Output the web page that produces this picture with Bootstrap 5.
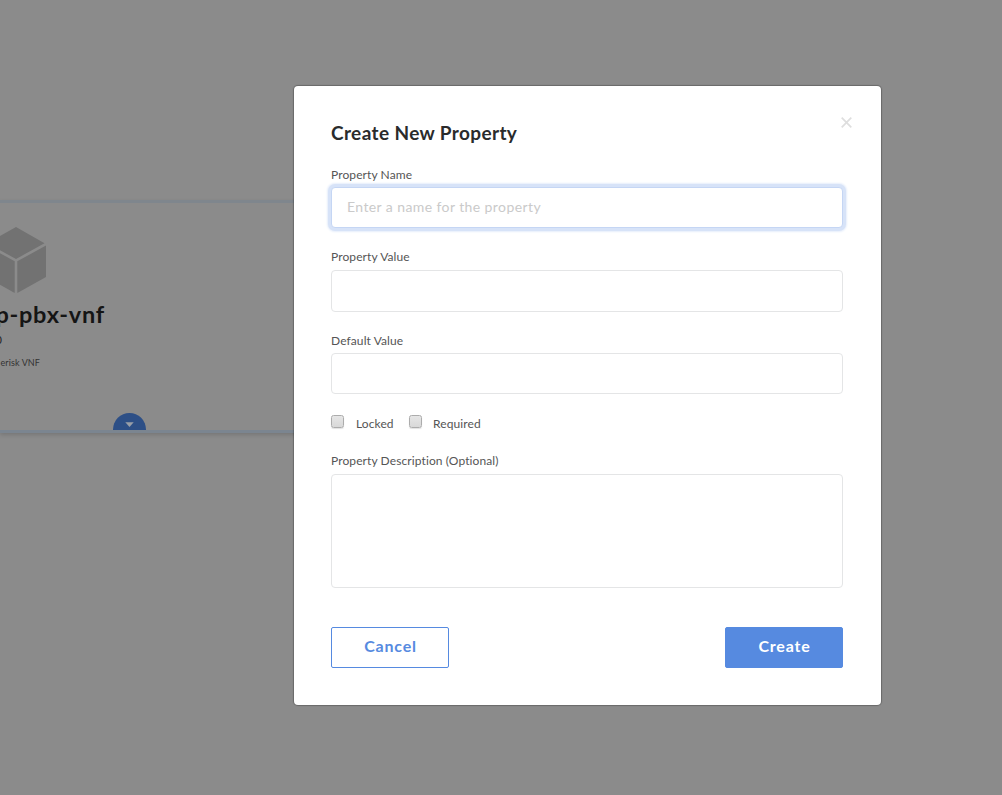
<!DOCTYPE html>
<html lang="en">
<head>
<meta charset="utf-8">
<meta name="viewport" content="width=device-width, initial-scale=1">
<title>Create New Property</title>
<link href="https://cdn.jsdelivr.net/npm/bootstrap@5.3.0/dist/css/bootstrap.min.css" rel="stylesheet">
<style>
body{background:#8b8b8b;font-family:Lato,"Open Sans",sans-serif;color:#333;height:795px;overflow:hidden}
.vnf-panel{margin-top:200px;height:233px;width:320px;background:#8b8b8b;border-top:3px solid #7f868d;border-bottom:3px solid #7b8590;box-shadow:0 2px 4px rgba(0,0,0,.15)}
.vnf-info{width:106px;padding-top:24px;overflow:hidden}
.vnf-info svg{display:block;margin-left:-14px}
.vnf-line{display:flex;justify-content:flex-end;white-space:nowrap}
.vnf-name{font-size:23.5px;font-weight:700;line-height:28px;color:#151515;margin-top:7px;width:105px;letter-spacing:.75px}
.vnf-version{font-size:11px;line-height:14px;margin-top:5px;width:2px;color:#222}
.vnf-kind{font-size:9px;line-height:12px;margin-top:10px;width:40px;color:#333;letter-spacing:.1px}
.vnf-toggle{width:33px;height:17px;margin:44px 0 0 113px;border-radius:17px 17px 0 0;background:#2d4f86}
.modal-layer{inset:0}
.dialog-box{width:587px;height:619px;margin:86px 0 0 294px;padding:0 38px 0 37px;border:0;border-radius:4px;background:#fff;box-shadow:0 0 1px 1px rgba(0,0,0,.25)}
.dialog-head{height:81px;padding-top:33px}
.dialog-head h1{font-size:19px;line-height:28px;font-weight:700;color:#2a2b2c;letter-spacing:.38px}
.close-x{width:11px;height:11px;margin:-2px -9px 0 0}
.field-label{display:block;font-size:12px;line-height:16px;color:#555;margin:0;letter-spacing:.1px}
.form-control{border:1px solid #e4e5e6;border-radius:4px;padding:0 15px;height:42px;font-size:14px;color:#333;background:#fff;resize:none}
.form-control::placeholder{color:#cacaca;opacity:1;letter-spacing:.41px}
.form-control.focused{height:41px;padding-bottom:2px;margin-top:4px;border-color:#c5d6f4;box-shadow:0 0 0 3px #d7e3f8,0 0 2px 4px #e6eefb}
.value-label{margin-top:21px}
.value-field{margin-top:5px}
.default-field{margin-top:4px;height:41px}
.checks{margin-top:21px;height:38px}
.locked-label{margin:1px 15px 0 12px;width:38px;white-space:nowrap}
.required-label{margin:1px 0 0 11px}
.description-field{margin-top:5px;height:114px}
.dialog-foot{margin-top:39px}
.form-check-input.tick{width:13px;height:13px;margin:0;border:1px solid #acacac;border-radius:2.5px;background:linear-gradient(#e6e6e6,#d8d8d8);box-shadow:0 1px 1px rgba(0,0,0,.12)}
.action{width:118px;height:41px;border-radius:2px;border:1px solid #568ae0;font-size:16px;font-weight:700;line-height:36px;padding:0 0 3px 1px;letter-spacing:.8px}
.action-outline{color:#568ae0;background:#fff}
.action-fill{color:#fff;background:#568ae0}
</style>
</head>
<body class="position-relative">
<main class="overflow-hidden h-100">
  <section class="vnf-panel">
    <div class="vnf-info">
      <svg width="60" height="66" viewBox="0 0 60 66" fill="#727272"><path d="M30 0 58.5 16.2 30 32 1.5 16.2Z"/><path d="M60 18.5V50L31.3 66V34.3Z"/><path d="M0 18.5V50L28.7 66V34.3Z"/></svg>
      <div class="vnf-line vnf-name"><span>p-pbx-vnf</span></div>
      <div class="vnf-line vnf-version"><span>0</span></div>
      <div class="vnf-line vnf-kind"><span>erisk VNF</span></div>
    </div>
    <div class="vnf-toggle d-flex justify-content-center">
      <svg width="9" height="17" viewBox="0 0 9 17"><path d="M.3 9.3h8.4L4.5 14Z" fill="#9a9fa7"/></svg>
    </div>
  </section>
</main>
<div class="modal-layer position-absolute">
  <form class="dialog-box">
    <header class="dialog-head d-flex justify-content-between">
      <h1 class="m-0">Create New Property</h1>
      <svg class="close-x" viewBox="0 0 11 11" stroke="#dedede" stroke-width="1.7"><path d="m.7.7 9.6 9.6M10.3.7.7 10.3"/></svg>
    </header>
    <label class="field-label" for="pname">Property Name</label>
    <input id="pname" class="form-control focused" placeholder="Enter a name for the property">
    <label class="field-label value-label" for="pvalue">Property Value</label>
    <input id="pvalue" class="form-control value-field">
    <label class="field-label value-label" for="dvalue">Default Value</label>
    <input id="dvalue" class="form-control default-field">
    <div class="d-flex checks">
      <input id="locked" type="checkbox" class="form-check-input tick"><label class="field-label locked-label" for="locked">Locked</label>
      <input id="required" type="checkbox" class="form-check-input tick"><label class="field-label required-label" for="required">Required</label>
    </div>
    <label class="field-label" for="pdesc">Property Description (Optional)</label>
    <textarea id="pdesc" class="form-control description-field"></textarea>
    <footer class="dialog-foot d-flex justify-content-between">
      <button type="button" class="btn action action-outline">Cancel</button>
      <button type="button" class="btn action action-fill">Create</button>
    </footer>
  </form>
</div>
<script src="https://cdn.jsdelivr.net/npm/bootstrap@5.3.0/dist/js/bootstrap.bundle.min.js"></script>
</body>
</html>
